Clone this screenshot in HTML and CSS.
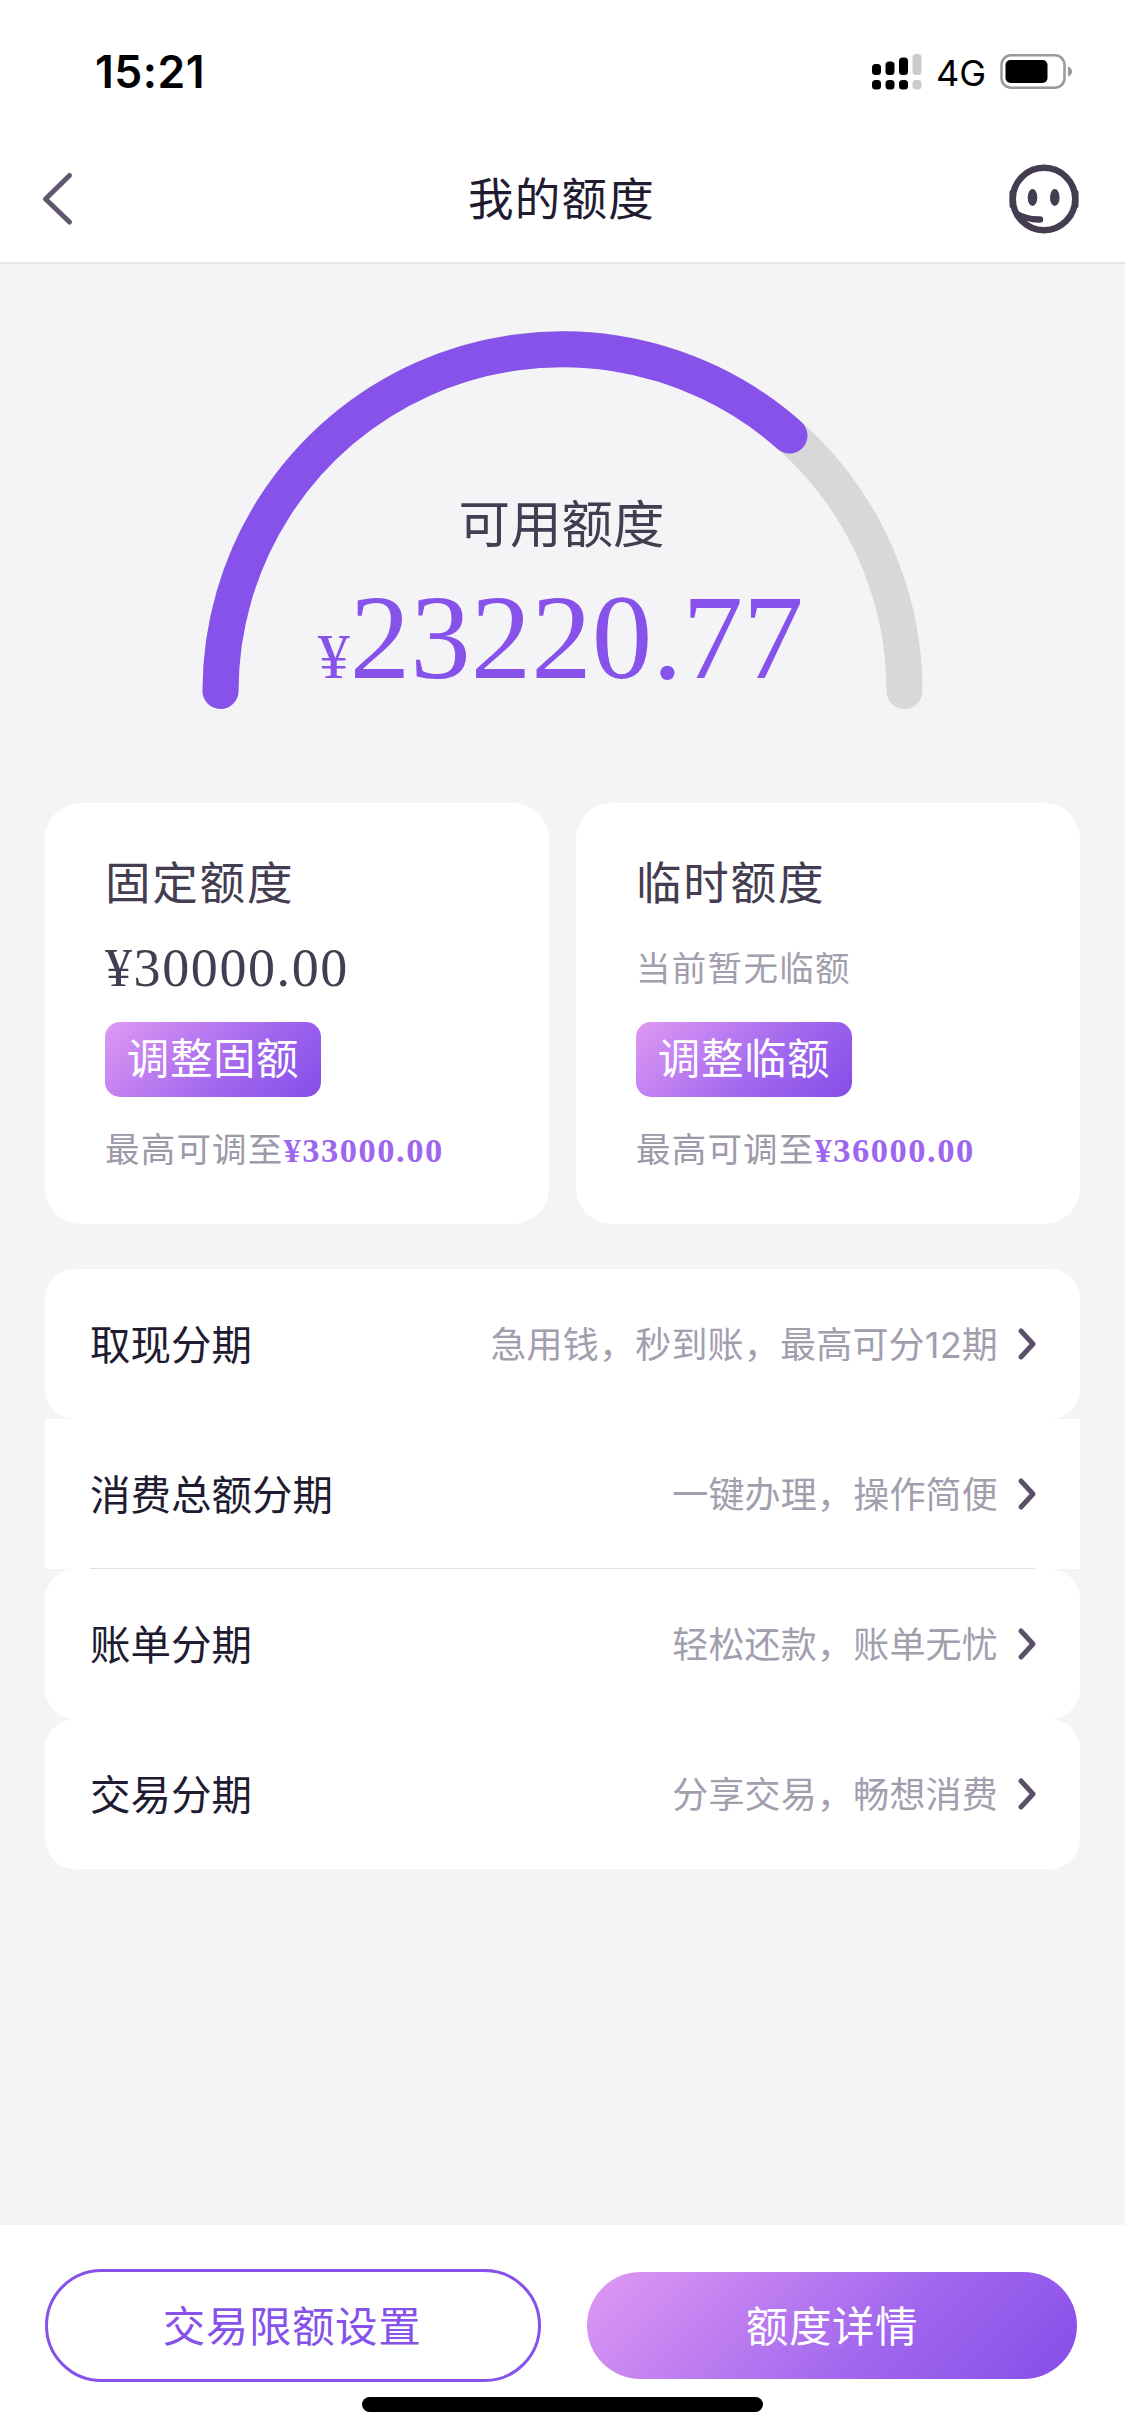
FILE: index.html
```html
<!DOCTYPE html>
<html lang="zh-CN">
<head>
<meta charset="utf-8">
<title>我的额度</title>
<link rel="stylesheet" href="styles.css">
</head>
<body>
<div class="screen">
  <header class="top">
    <div class="status">
      <span class="time">15:21</span>
      <div class="indicators">
        <svg class="signal" width="50" height="36" viewBox="0 0 50 36">
          <rect x="0" y="10" width="9" height="11" rx="3.500"/>
          <rect x="13.5" y="7.5" width="9" height="13.500" rx="3.500"/>
          <rect x="27" y="3.500" width="9" height="17.500" rx="3.500"/>
          <rect x="40.500" y="0" width="9" height="21" rx="3.500" fill="#ccc"/>
          <rect x="0" y="26" width="9" height="9.500" rx="3.500"/>
          <rect x="13.500" y="26" width="9" height="9.500" rx="3.500"/>
          <rect x="27" y="26" width="9" height="9.500" rx="3.500"/>
          <rect x="40.500" y="26" width="9" height="9.500" rx="3.500" fill="#ccc"/>
        </svg>
        <span class="network">4G</span>
        <svg class="battery" width="73" height="35" viewBox="0 0 73 35">
          <rect x="1.500" y="1.250" width="63" height="32.500" rx="9.500" fill="none" stroke="#999" stroke-width="2.500"/>
          <rect x="5.500" y="6" width="42" height="23" rx="5"/>
          <path d="M68 12.500 Q72 14 72 17.500 Q72 21 68 22.500 Z" fill="#999"/>
        </svg>
      </div>
    </div>
    <nav class="nav">
      <svg class="back" width="36" height="60" viewBox="0 0 36 60">
        <path d="M30.500 6.500 L6.500 30 L30.500 53" fill="none" stroke="#61566f" stroke-width="5" stroke-linecap="round" stroke-linejoin="round"/>
      </svg>
      <h1 class="title">我的额度</h1>
      <svg class="service" width="70" height="70" viewBox="0 0 70 70">
        <circle cx="35" cy="35" r="31.200" fill="none" stroke="#443c51" stroke-width="6.400"/>
        <rect x="0.500" y="26" width="6.500" height="18" rx="2" fill="#443c51"/>
        <rect x="63" y="26" width="6.500" height="18" rx="2" fill="#443c51"/>
        <ellipse cx="23.500" cy="33.500" rx="4.800" ry="8.500" fill="#443c51"/>
        <ellipse cx="45.800" cy="33.500" rx="4.800" ry="8.500" fill="#443c51"/>
        <path d="M7 46 Q19 53 31 52.300 A3.200 3.200 0 0 1 31 58.700 Q24 59 18 57 L13 58 Z" fill="#443c51"/>
      </svg>
    </nav>
  </header>

  <main class="content">
    <section class="gauge">
      <svg class="arc" width="721" height="380" viewBox="0 0 721 380">
        <path d="M18.500 361 A342 342 0 0 1 702.500 361" fill="none" stroke="#d8d8d8" stroke-width="36" stroke-linecap="round"/>
        <path d="M18.500 361 A342 342 0 0 1 587.500 105.500" fill="none" stroke="#8652ea" stroke-width="36" stroke-linecap="round"/>
      </svg>
      <div class="reading">
        <p class="reading-label">可用额度</p>
        <p class="reading-value"><span class="currency">¥</span>23220.77</p>
      </div>
    </section>

    <section class="cards">
      <article class="card">
        <h2 class="card-title">固定额度</h2>
        <p class="card-value">¥30000.00</p>
        <button class="adjust">调整固额</button>
        <p class="card-note">最高可调至<b class="max">¥33000.00</b></p>
      </article>
      <article class="card">
        <h2 class="card-title">临时额度</h2>
        <p class="card-empty">当前暂无临额</p>
        <button class="adjust">调整临额</button>
        <p class="card-note">最高可调至<b class="max">¥36000.00</b></p>
      </article>
    </section>

    <section class="list">
      <a class="row">
        <span class="row-name">取现分期</span>
        <span class="row-desc">急用钱，秒到账，最高可分<span class="num">12</span>期</span>
        <svg class="chevron" width="20" height="36" viewBox="0 0 20 36"><path d="M4 5 L16 18 L4 31"/></svg>
      </a>
      <a class="row row-square">
        <span class="row-name">消费总额分期</span>
        <span class="row-desc">一键办理，操作简便</span>
        <svg class="chevron" width="20" height="36" viewBox="0 0 20 36"><path d="M4 5 L16 18 L4 31"/></svg>
      </a>
      <a class="row">
        <span class="row-name">账单分期</span>
        <span class="row-desc">轻松还款，账单无忧</span>
        <svg class="chevron" width="20" height="36" viewBox="0 0 20 36"><path d="M4 5 L16 18 L4 31"/></svg>
      </a>
      <a class="row">
        <span class="row-name">交易分期</span>
        <span class="row-desc">分享交易，畅想消费</span>
        <svg class="chevron" width="20" height="36" viewBox="0 0 20 36"><path d="M4 5 L16 18 L4 31"/></svg>
      </a>
    </section>
  </main>

  <footer class="footer">
    <div class="actions">
      <button class="action action-outline">交易限额设置</button>
      <button class="action action-fill">额度详情</button>
    </div>
    <div class="home-bar"></div>
  </footer>
</div>
</body>
</html>
```
FILE: styles.css
```css
* {
  box-sizing: border-box;
  margin: 0;
  padding: 0;
}

body {
  font-family: "Liberation Sans", "Noto Sans CJK SC", sans-serif;
  background: #f4f4f7;
  color: #443c51;
}

.screen {
  display: flex;
  flex-direction: column;
  width: 1125px;
  height: 2435px;
  overflow: hidden;
}

button {
  border: 0;
  font-family: inherit;
}

svg {
  display: block;
  flex: none;
}

/* Status bar and navigation */
.top {
  height: 264px;
  background: #fff;
  border-bottom: 2px solid #e7e7e9;
}

.status {
  display: flex;
  justify-content: space-between;
  height: 134px;
  padding: 42px 52px 0 95px;
  color: #000;
}

.time {
  font: 600 44.5px/60px Inter, sans-serif;
  letter-spacing: 0.5px;
}

.indicators {
  display: flex;
  align-items: flex-start;
  padding-top: 12px;
}

.network {
  width: 78px;
  padding-left: 14px;
  font: 400 36px/38px Inter, sans-serif;
}

.nav {
  display: flex;
  align-items: center;
  justify-content: space-between;
  height: 128px;
  padding: 2px 46px 0 39px;
}

.back {
  margin-right: 39px;
}

.title {
  padding-top: 4px;
  font-size: 45.5px;
  font-weight: 400;
  line-height: 66px;
  letter-spacing: 1.3px;
  color: #211b31;
}

/* Gauge */
.content {
  flex: 1;
}

.gauge {
  display: grid;
  justify-items: center;
  height: 539px;
  padding-top: 66px;
}

.arc,
.reading {
  grid-area: 1 / 1;
}

.reading {
  padding-top: 158px;
  text-align: center;
}

.reading-label {
  font-size: 51.5px;
  line-height: 74px;
  margin-right: 2px;
}

.reading-value {
  font: 121px/120px "Liberation Serif", serif;
  margin-top: 15px;
  margin-right: 4px;
  color: #8652ea;
}

.currency {
  font-size: 64px;
}

/* Limit cards */
.cards {
  display: grid;
  grid-template-columns: 504px 504px;
  gap: 27px;
  padding-left: 45px;
}

.card {
  height: 421px;
  padding: 48px 60px 0;
  background: #fff;
  border-radius: 36px;
}

.card-title {
  font-size: 45.5px;
  font-weight: 400;
  line-height: 68px;
  letter-spacing: 1.8px;
}

.card-value {
  height: 103px;
  padding-top: 19px;
  font: 54px/60px "Liberation Serif", serif;
  letter-spacing: 1.6px;
}

.card-empty {
  height: 103px;
  padding-top: 24px;
  font-size: 34.5px;
  line-height: 52px;
  letter-spacing: 1.3px;
  color: #a29eae;
}

.adjust {
  display: block;
  width: 216px;
  height: 75px;
  border-radius: 15px;
  background: linear-gradient(135deg, #df99f3, #a267ee 60%, #854de8);
  color: #fff;
  font-size: 42.5px;
  line-height: 75px;
  letter-spacing: 0.6px;
}

.card-note {
  margin-top: 27px;
  font-size: 34.5px;
  line-height: 52px;
  letter-spacing: 1.2px;
  white-space: nowrap;
  color: #9d99a9;
}

.max {
  font-family: "Liberation Serif", serif;
  letter-spacing: 1.5px;
  color: #9d66ee;
}

/* Instalment list */
.list {
  padding: 45px 45px 0;
}

.row {
  display: flex;
  align-items: center;
  height: 150px;
  padding: 0 43px 0 45px;
  background: #fff;
  border-radius: 30px;
}

.row-square {
  border-radius: 0;
  background: linear-gradient(#e2e2e6, #e2e2e6) center bottom / 945px 1px no-repeat #fff;
}

.row-name {
  flex: 1;
  padding-bottom: 4px;
  font-size: 40.5px;
  color: #211b31;
}

.row-desc {
  padding-bottom: 4px;
  font-size: 36px;
  letter-spacing: 0.2px;
  color: #a29eae;
}

.num {
  font-family: Inter, sans-serif;
}

.chevron {
  margin-left: 19px;
  fill: none;
  stroke: #5c5068;
  stroke-width: 5px;
  stroke-linecap: round;
  stroke-linejoin: round;
}

/* Bottom actions */
.footer {
  height: 210px;
  padding-top: 44px;
  background: #fff;
}

.actions {
  display: flex;
  align-items: center;
  justify-content: space-between;
  height: 113px;
  padding: 0 48px 0 45px;
}

.action {
  padding-bottom: 4px;
  border-radius: 57px;
  font-size: 42.5px;
  letter-spacing: 0.6px;
}

.action-outline {
  width: 496px;
  height: 113px;
  padding-right: 2px;
  border: 3px solid #8652ea;
  background: #fff;
  color: #8652ea;
}

.action-fill {
  width: 490px;
  height: 107px;
  background: linear-gradient(135deg, #df99f3, #a267ee 60%, #854de8);
  color: #fff;
}

.home-bar {
  width: 401px;
  height: 15px;
  margin: 15px auto 0;
  border-radius: 8px;
  background: #000;
}
```
